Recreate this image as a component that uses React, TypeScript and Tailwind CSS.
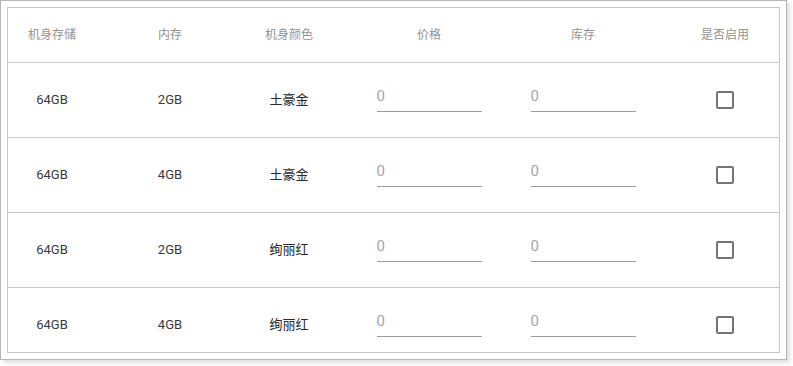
import React from 'react';

interface SkuRow {
  storage: string;
  memory: string;
  color: string;
}

const rows: SkuRow[] = [
  { storage: '64GB', memory: '2GB', color: '土豪金' },
  { storage: '64GB', memory: '4GB', color: '土豪金' },
  { storage: '64GB', memory: '2GB', color: '绚丽红' },
  { storage: '64GB', memory: '4GB', color: '绚丽红' },
];

const headers = ['机身存储', '内存', '机身颜色', '价格', '库存', '是否启用'];

// column widths tuned so each cell's content sits under its header
const gridCols = 'grid grid-cols-[88px_148px_90px_190px_118px_1fr]';

const NumberInput: React.FC = () => (
  <input
    type="text"
    placeholder="0"
    className="w-[105px] h-[28px] mb-[4px] border-0 border-b border-[#9e9e9e] bg-transparent pb-[4px] text-[15px] text-[#333] placeholder:text-[#a6a6a6] outline-none"
  />
);

const App: React.FC = () => {
  return (
    <div
      className="w-[793px] h-[366px] bg-white"
      style={{ fontFamily: "Roboto, 'Noto Sans CJK SC', sans-serif" }}
    >
      {/* Outer frame */}
      <div className="w-[787px] h-[360px] border border-[#b5b5b5] p-[6px] bg-white shadow-[3px_3px_4px_rgba(0,0,0,0.12)]">
        {/* Table */}
        <div className="h-full border border-[#c8c8c8] overflow-hidden">
          <div className={`${gridCols} h-[55px] border-b border-[#c8c8c8] items-center text-[12px] text-[#939393]`}>
            {headers.map((h, i) => (
              <div key={h} className={`flex justify-center ${i === 5 ? 'pl-[29px]' : ''}`}>
                {h}
              </div>
            ))}
          </div>

          {rows.map((row, idx) => (
            <div
              key={idx}
              className={`${gridCols} h-[75px] border-b border-[#c8c8c8] items-center text-[13px] text-[#3a3a3a]`}
            >
              <div className="flex justify-center">{row.storage}</div>
              <div className="flex justify-center">{row.memory}</div>
              <div className="flex justify-center text-[#2a2a2a]">{row.color}</div>
              <div className="flex justify-center">
                <NumberInput />
              </div>
              <div className="flex justify-center">
                <NumberInput />
              </div>
              <div className="flex justify-center pl-[29px]">
                <span className="block w-[18px] h-[18px] rounded-[2px] border-2 border-[#757575]" />
              </div>
            </div>
          ))}
        </div>
      </div>
    </div>
  );
};

export default App;
